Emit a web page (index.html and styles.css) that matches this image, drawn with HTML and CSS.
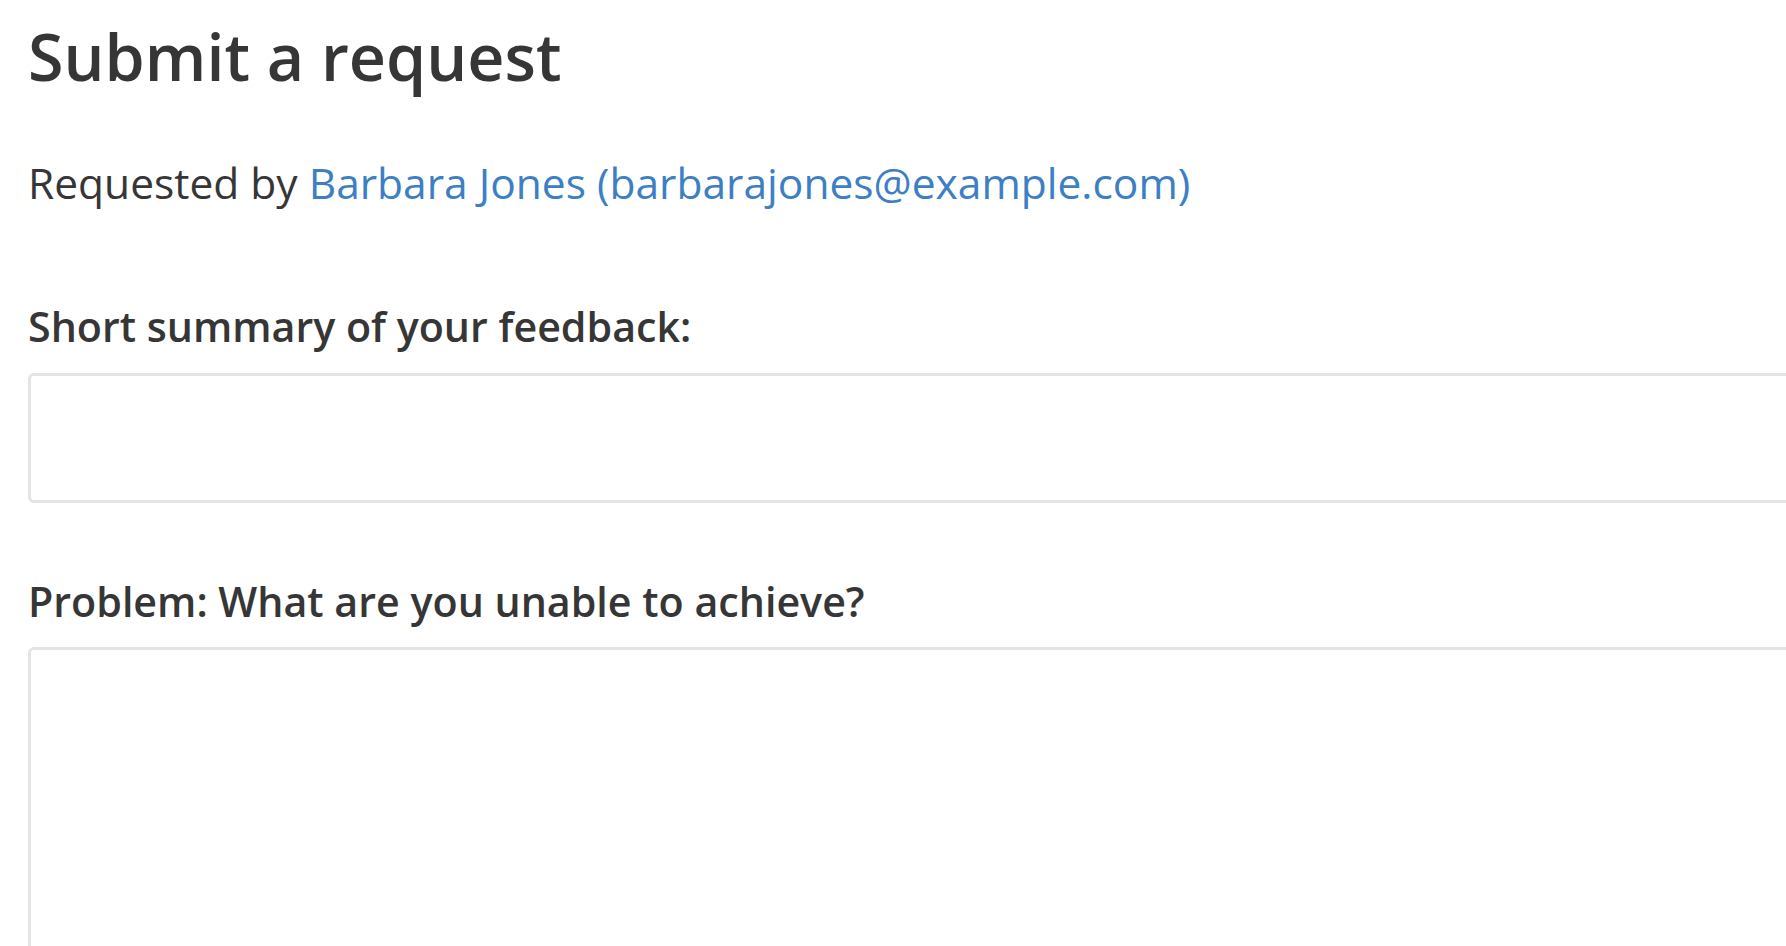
FILE: index.html
```html
<!DOCTYPE html>
<html lang="en">
<head>
<meta charset="utf-8">
<title>Submit a request</title>
<link rel="stylesheet" href="styles.css">
</head>
<body>
<main class="page">
  <h1 class="title">Submit a request</h1>
  <p class="requester">Requested by <a class="requester-link" href="#">Barbara Jones (barbarajones@example.com)</a></p>
  <form class="request-form">
    <div class="field field-summary">
      <label class="field-label" for="summary">Short summary of your feedback:</label>
      <input class="field-input" id="summary" type="text">
    </div>
    <div class="field field-problem">
      <label class="field-label" for="problem">Problem: What are you unable to achieve?</label>
      <textarea class="field-textarea" id="problem"></textarea>
    </div>
  </form>
</main>
</body>
</html>
```

FILE: styles.css
```css
html, body {
  margin: 0;
  padding: 0;
  background: #ffffff;
  overflow: hidden;
}

body {
  font-family: "Open Sans", "Noto Sans", "Liberation Sans", sans-serif;
  color: #363636;
}

.page {
  padding: 15px 0 0 28px;
  width: 1900px;
}

.title {
  font-size: 64.6px;
  font-weight: 600;
  line-height: 82px;
  margin: 0;
}

.requester {
  font-size: 42.5px;
  font-weight: 400;
  line-height: 63px;
  margin: 54px 0 0 0;
}

.requester-link {
  color: #3d7fc4;
  text-decoration: none;
}

.request-form {
  display: flex;
  flex-direction: column;
}

.field {
  display: flex;
  flex-direction: column;
}

.field-summary {
  margin-top: 81px;
}

.field-problem {
  margin-top: 67px;
}

.field-label {
  font-size: 41.2px;
  font-weight: 600;
  line-height: 63px;
  margin-bottom: 15px;
}

.field-problem .field-label {
  margin-bottom: 14px;
}

.field-input,
.field-textarea {
  box-sizing: border-box;
  border: 3px solid #e4e4e4;
  border-radius: 6px;
  background: #ffffff;
  font: inherit;
  outline: none;
  display: block;
  width: 100%;
}

.field-input {
  height: 130px;
}

.field-textarea {
  height: 500px;
  resize: none;
}
```
